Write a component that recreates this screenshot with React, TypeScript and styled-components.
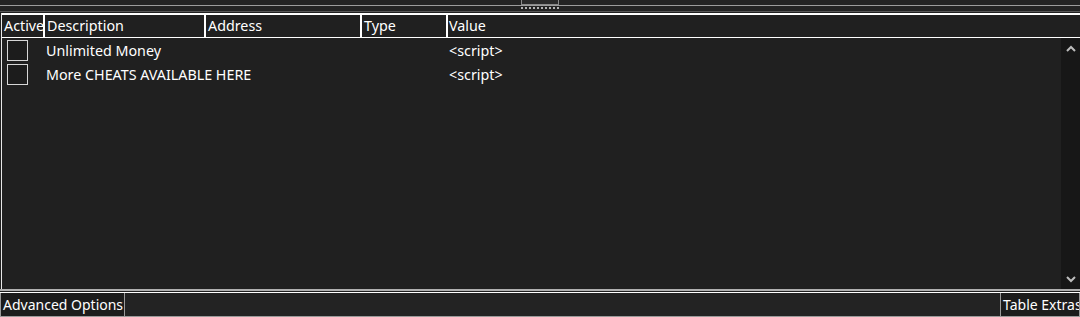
import React from "react";
import styled, { createGlobalStyle } from "styled-components";

const GlobalStyle = createGlobalStyle`
  html, body { margin: 0; padding: 0; background: #202020; }
  body { font-family: "Noto Sans", "Open Sans", sans-serif; font-size: 14.3px; color: #ffffff; }
  * { box-sizing: border-box; }
`;

const Window = styled.div`
  display: flex;
  flex-direction: column;
  width: 1080px;
  height: 317px;
  background: #202020;
  overflow: hidden;
`;

const TopBar = styled.div`
  height: 6px;
  border-bottom: 1px solid #9c9c9c;
  display: flex;
  justify-content: center;
  background: #232323;
`;

const Grip = styled.div`
  width: 38px;
  height: 5px;
  border: 1px solid #8a8a8a;
  border-top: none;
  background: #2a2a2a;
`;

const Splitter = styled.div`
  height: 6px;
  margin-bottom: 1px;
  border-bottom: 1px solid #585858;
  display: flex;
  justify-content: center;
  padding-top: 1px;
  background: #232323;
`;

const Dots = styled.div`
  display: flex;
  gap: 2px;
  height: 2px;
`;

const Dot = styled.span`
  width: 2px;
  height: 2px;
  background: #b4b4b4;
`;

const Table = styled.div`
  display: flex;
  flex-direction: column;
  height: 276px;
  margin-left: 1px;
  border-left: 1px solid #e8e8e8;
`;

const columns = "43px 161px 156px 86px 1fr";

const Header = styled.div`
  display: grid;
  grid-template-columns: ${columns};
  height: 25px;
  border-top: 2px solid #ffffff;
  border-bottom: 1px solid #ffffff;
  background: #202020;
`;

const HeadCell = styled.div<{ $last?: boolean }>`
  display: flex;
  align-items: center;
  padding-left: ${(p) => (p.$last ? "1px" : "2px")};
  border-right: ${(p) => (p.$last ? "none" : "2px solid #ffffff")};
  white-space: nowrap;
  overflow: hidden;
  line-height: 22px;
`;

const Body = styled.div`
  flex: 1;
  display: flex;
`;

const Rows = styled.div`
  flex: 1;
  display: flex;
  flex-direction: column;
  background: #202020;
`;

const Row = styled.div`
  display: grid;
  grid-template-columns: ${columns};
  height: 24px;
  align-items: center;
`;

const CheckCell = styled.div`
  padding-left: 5px;
  display: flex;
  align-items: center;
`;

const Checkbox = styled.span`
  width: 21px;
  height: 21px;
  border: 1px solid #d6d6d6;
  background: #1c1c1c;
`;

const Cell = styled.div<{ $pad?: number }>`
  padding-left: ${(p) => p.$pad ?? 0}px;
  white-space: nowrap;
`;

const ScrollBar = styled.div`
  width: 19px;
  background: #171717;
  display: flex;
  flex-direction: column;
  justify-content: space-between;
  align-items: center;
  padding: 7px 0 6px;
`;

const Divider = styled.div`
  height: 3px;
  border-top: 2px solid #b0b0b0;
  background: #202020;
`;

const Footer = styled.div`
  height: 25px;
  display: flex;
  justify-content: space-between;
  border-top: 1px solid #ffffff;
  border-bottom: 1px solid #9a9a9a;
  background: #232323;
`;

const FooterButton = styled.div<{ $width: number }>`
  width: ${(p) => p.$width}px;
  display: flex;
  align-items: center;
  padding: 0 0 0 2px;
  border-left: 1px solid #9a9a9a;
  border-right: 1px solid #9a9a9a;
  background: #1c1c1c;
  font-size: 14px;
  white-space: nowrap;
  overflow: hidden;
`;

const Chevron = ({ up }: { up?: boolean }) => (
  <svg width="10" height="7" viewBox="0 0 10 7">
    <polyline
      points={up ? "1,6 5,2 9,6" : "1,1 5,5 9,1"}
      fill="none"
      stroke="#bdbdbd"
      strokeWidth="2"
    />
  </svg>
);

const rows = [
  { desc: "Unlimited Money", value: "<script>" },
  { desc: "More CHEATS AVAILABLE HERE", value: "<script>" },
];

export default function App() {
  return (
    <>
      <GlobalStyle />
      <Window>
        <TopBar>
          <Grip />
        </TopBar>
        <Splitter>
          <Dots>
            {Array.from({ length: 10 }).map((_, i) => (
              <Dot key={i} />
            ))}
          </Dots>
        </Splitter>
        <Table>
          <Header>
            <HeadCell>Active</HeadCell>
            <HeadCell>Description</HeadCell>
            <HeadCell>Address</HeadCell>
            <HeadCell>Type</HeadCell>
            <HeadCell $last>Value</HeadCell>
          </Header>
          <Body>
            <Rows>
              {rows.map((r) => (
                <Row key={r.desc}>
                  <CheckCell>
                    <Checkbox />
                  </CheckCell>
                  <Cell $pad={1}>{r.desc}</Cell>
                  <Cell />
                  <Cell />
                  <Cell $pad={1}>{r.value}</Cell>
                </Row>
              ))}
            </Rows>
            <ScrollBar>
              <Chevron up />
              <Chevron />
            </ScrollBar>
          </Body>
        </Table>
        <Divider />
        <Footer>
          <FooterButton $width={125}>Advanced Options</FooterButton>
          <FooterButton $width={80}>Table Extras</FooterButton>
        </Footer>
      </Window>
    </>
  );
}
